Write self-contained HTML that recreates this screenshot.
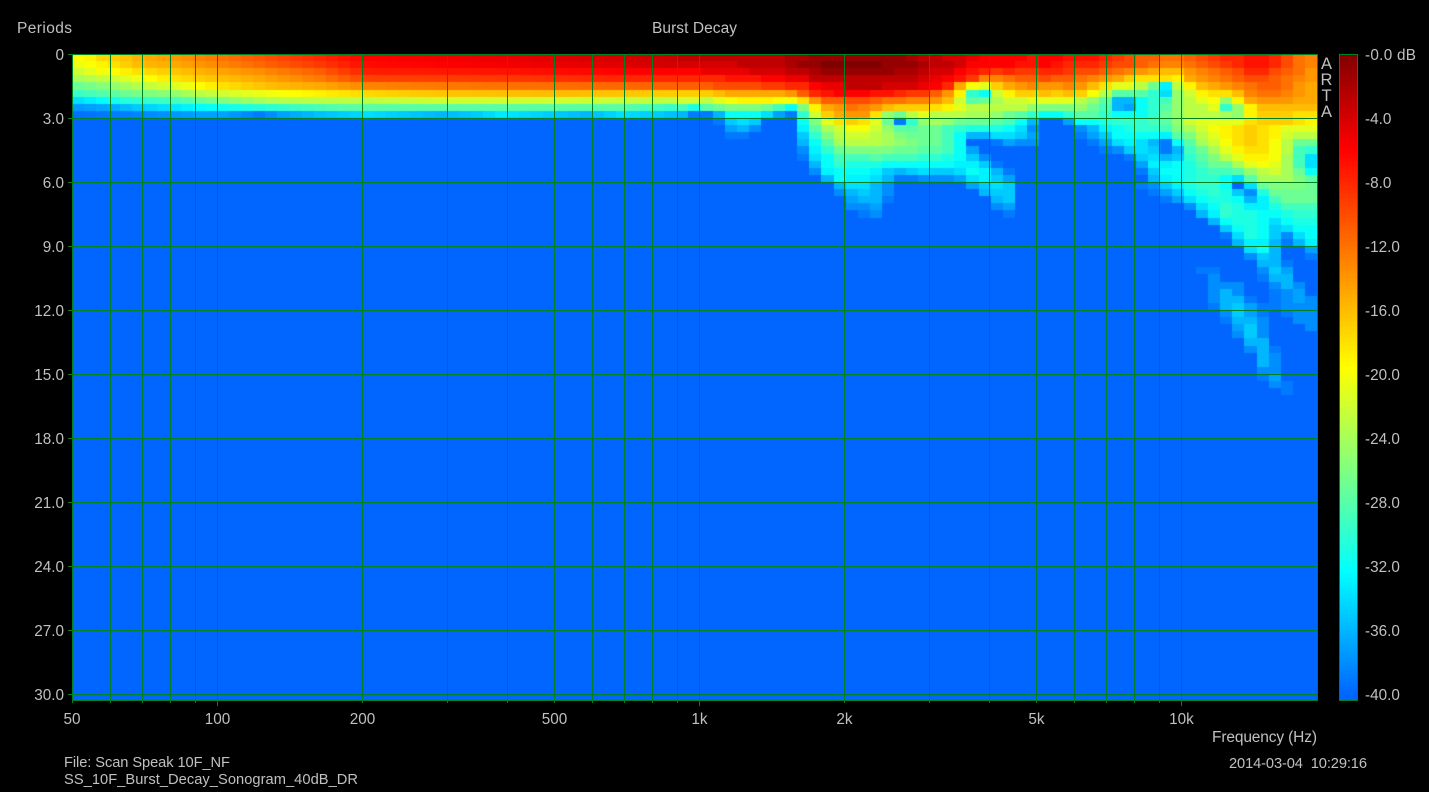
<!DOCTYPE html>
<html>
<head>
<meta charset="utf-8">
<title>Burst Decay</title>
<style>
html,body{margin:0;padding:0;background:#000;width:1429px;height:792px;overflow:hidden}
#c{position:absolute;left:72px;top:54px}
#b{position:absolute;left:1339px;top:54px}
svg{position:absolute;left:0;top:0}
text{font-family:"Liberation Sans",Arial,sans-serif;fill:#c0c0c0;white-space:pre}
.a{font-size:15.3px}
.t{font-size:15.5px}
.s{font-size:14.67px}
.ar{font-size:16.5px;text-anchor:middle}
.r{text-anchor:end}
.m{text-anchor:middle}
</style>
</head>
<body>
<canvas id="c" width="1245" height="646" style="background:#0066ff"></canvas>
<canvas id="b" width="19" height="647" style="background:#0066ff"></canvas>
<svg width="1429" height="792" viewBox="0 0 1429 792">
<g shape-rendering="crispEdges" stroke="#008020" stroke-width="1" fill="none">
<path d="M68 54.5H1317.5M68 118.5H1317.5M68 182.5H1317.5M68 246.5H1317.5M68 310.5H1317.5M68 374.5H1317.5M68 438.5H1317.5M68 502.5H1317.5M68 566.5H1317.5M68 630.5H1317.5M68 694.5H1317.5M72 700.5H1317.5"/>
<path d="M72.5 54V703M110.5 54V703M142.5 54V703M170.5 54V703M195.5 54V703M217.5 54V706M362.5 54V703M447.5 54V703M507.5 54V703M554.5 54V703M592.5 54V703M624.5 54V703M652.5 54V703M677.5 54V703M699.5 54V706M844.5 54V703M929.5 54V703M989.5 54V703M1036.5 54V703M1074.5 54V703M1106.5 54V703M1134.5 54V703M1159.5 54V703M1181.5 54V706M1317.5 54V701"/>
<rect x="1339.5" y="54.5" width="18" height="646"/>
</g>
<text class="t" x="17" y="33" textLength="55" lengthAdjust="spacing">Periods</text>
<text class="t" x="652" y="33" textLength="85" lengthAdjust="spacing">Burst Decay</text>
<text class="a r" x="64" y="60">0</text>
<text class="a r" x="64" y="124">3.0</text>
<text class="a r" x="64" y="188">6.0</text>
<text class="a r" x="64" y="252">9.0</text>
<text class="a r" x="64" y="316">12.0</text>
<text class="a r" x="64" y="380">15.0</text>
<text class="a r" x="64" y="444">18.0</text>
<text class="a r" x="64" y="508">21.0</text>
<text class="a r" x="64" y="572">24.0</text>
<text class="a r" x="64" y="636">27.0</text>
<text class="a r" x="64" y="700">30.0</text>
<text class="a m" x="72" y="724">50</text>
<text class="a m" x="217.5" y="724">100</text>
<text class="a m" x="362.5" y="724">200</text>
<text class="a m" x="554.5" y="724">500</text>
<text class="a m" x="699.5" y="724">1k</text>
<text class="a m" x="844.5" y="724">2k</text>
<text class="a m" x="1036.5" y="724">5k</text>
<text class="a m" x="1181.5" y="724">10k</text>
<text class="t" x="1212" y="742" textLength="105" lengthAdjust="spacing">Frequency (Hz)</text>
<text class="s" x="64" y="767" textLength="166" lengthAdjust="spacing">File: Scan Speak 10F_NF</text>
<text class="s" x="64" y="784" textLength="294" lengthAdjust="spacing">SS_10F_Burst_Decay_Sonogram_40dB_DR</text>
<text class="s" x="1229" y="768" textLength="138" lengthAdjust="spacing">2014-03-04  10:29:16</text>
<text class="ar" x="1326.5" y="69">A</text>
<text class="ar" x="1326.5" y="85">R</text>
<text class="ar" x="1326.5" y="101">T</text>
<text class="ar" x="1326.5" y="117">A</text>
<text class="a" x="1365" y="60" textLength="51" lengthAdjust="spacing">-0.0 dB</text>
<text class="a" x="1365" y="124">-4.0</text>
<text class="a" x="1365" y="188">-8.0</text>
<text class="a" x="1365" y="252">-12.0</text>
<text class="a" x="1365" y="316">-16.0</text>
<text class="a" x="1365" y="380">-20.0</text>
<text class="a" x="1365" y="444">-24.0</text>
<text class="a" x="1365" y="508">-28.0</text>
<text class="a" x="1365" y="572">-32.0</text>
<text class="a" x="1365" y="636">-36.0</text>
<text class="a" x="1365" y="700">-40.0</text>
</svg>
<script>
(function(){
var AL="0123456789abcdefghijklmnopqrstuvwxyzABCDE";
function col(L){
  var r,g,b,t;
  if(L<6){r=128+127*L/6;g=0;b=0;}
  else if(L<19.6){r=255;g=255*(L-6)/13.6;b=0;}
  else if(L<32.4){t=(L-19.6)/12.8;r=255*(1-t);g=255;b=255*t;}
  else {t=Math.min(1,(L-32.4)/7.6);r=0;g=255-153*t;b=255;}
  return "rgb("+Math.round(r)+","+Math.round(g)+","+Math.round(b)+")";
}
var LEFT=[
[0,19.5,1,19,2,17.5,3,17,5,15.5,8,14,10,13,15,10.5,20,8,24,6,35,5,45,4,50,3.5],
[0,20.5,2,19,3,18,5,16,8,15,10,14,15,11.5,20,9,24,6.5,35,5.5,45,4.5,50,3.5],
[0,22,2,20,3,19.5,5,18,8,16.5,10,15.5,15,13.5,20,11,24,7.5,35,7,45,6,50,6],
[0,24,3,22,5,20.5,6,19.5,8,18,11,16.5,15,15,20,12.5,24,9.5,35,9,45,8,50,8],
[0,27,3,25,6,22.5,9,20.5,10,19.5,12,18,16,16,20,15,24,13,35,12,45,11.5,50,11],
[0,29.5,4,27,8,25,10,23,14,21,18,19.5,21,18.5,24,17.5,30,16.5,40,16,50,17],
[0,34,2,32.5,4,30.5,8,29,12,26,16,23.5,20,23,24,23,30,22,40,22,50,23],
[0,37.5,3,36.5,5,35,8,33.5,10,32.5,14,31,18,29.5,22,28,24,28,35,28,45,28,50,30],
[0,39.5,5,38.5,10,37,12,37,15,39,17,37,20,35.5,23,34.5,24,34,27,35,30,36,33,35,35,33.5,38,34.5,42,36,45,34,48,35,50,36]
];
var S=[
[0,50,"333333333221111111123344566667"],[0,80,"6677789abbccba988778acd"],
[1,50,"444443333211000001112334666677"],[1,80,"678889aabcddcba98778acd"],
[2,50,"665555444332111111223446789899"],[2,80,"889aabcdefggedcba88abce"],
[3,50,"8888777665533333333345679ddcbb"],[3,80,"abbcdefhiiijfedcbaabcde"],
[4,50,"bbbaaaa9988655333444568fklhfed"],[4,80,"eedegillnrxnjgfedcbbcef"],
[5,50,"hhhgfffffeb8766677899bejuwmjhh"],[5,80,"ghghknsssuypmjiigdccdef"],
[6,50,"mmnlkjjjkkiebbaabccddegmsromml"],[6,80,"lllnpsAAwutpnlkpjfeeeff"],
[7,50,"tvsrqqqrtwqjfecdeghhhijlnnnnnp"],[7,80,"qqqprtABwuspnnlupjggggg"],
[8,50,"ADDAwwwyBDumhfeeiprnlnnnooprsu"],[8,80,"wwussuwwwurpnnnopjhhhii"],
[9,50,"EEEDzyzEEEwqlihilrDupoprrrstwA"],[9,80,"EEBwwvuuutspmllljjhhijj"],
[10,50,"EEEEBACEEExsomkkmpssrrtuvvvwyC"],[10,80,"EEECAxwvuutqomlkjhhikkk"],
[11,50,"EEEEDDEEEEzuqnmmnoqrrrtwAAyyzB"],[11,80,"EEEDBzwwwwxspnmlkiijlmm"],
[12,60,"Awsonnnopqrrtw"],[12,76,"DBCC"],[12,84,"DByxyADwronlliijmpp"],
[13,60,"CxurqqqqrrsstwB"],[13,85,"DCzyzDAuqonmjjkmsu"],
[14,60,"DywtttstttuuvwzC"],[14,87,"DzyAzvsqomkkknsy"],
[15,61,"AwuvvvwwwwwwxxzD"],[15,88,"Bxxwwtsqonmnoty"],
[16,61,"CxwwwxzAzyzzywxAD"],[16,88,"Dzwwvutsrpnnotu"],
[17,62,"AwxxyADDCCCByxzB"],[17,89,"Axwvuuwysqoprt"],
[18,63,"AyyAC"],[18,74,"Bzyz"],[18,88,"DCzxwuuwEytqqqr"],
[19,63,"CAzAC"],[19,75,"Azz"],[19,89,"DBzwwvvACvsrrr"],
[20,64,"BAAD"],[20,76,"Az"],[20,90,"DBywvuwzwtsss"],
[21,64,"CCB"],[21,76,"CB"],[21,92,"Axwvvwxvutt"],
[22,65,"DC"],[22,77,"D"],[22,93,"Aywwwxwwvv"],
[23,94,"Axuuwxxwt"],[24,95,"ywuwAyyw"],[25,95,"DyuwBCzw"],[26,96,"zwwADAx"],
[27,97,"ywAEEB"],[28,97,"CyzEED"],[29,98,"zzD"],[30,93,"DD"],[30,98,"ByA"],
[31,94,"C"],[31,98,"Dzz"],[32,94,"BBB"],[32,99,"BzB"],[33,94,"CzC"],[33,99,"DBA"],
[34,94,"CzzD"],[34,99,"DBAC"],[35,94,"DzyAD"],[35,99,"DCBB"],[36,95,"ByAD"],[36,100,"DBB"],
[37,95,"DzzC"],[37,101,"CB"],[38,96,"AyC"],[38,102,"C"],[39,96,"CyB"],[40,97,"zz"],
[41,97,"BzD"],[42,98,"zB"],[43,98,"zB"],[44,98,"BB"],[45,98,"DA"],[46,99,"CD"],[47,100,"D"],
[9,92,"mllllihhhij"],[10,92,"omkjihijlll"],[11,92,"qnljihijmnn"],[12,92,"somkihiknrr"],
[13,92,"troljiikntu"],[14,92,"usqnljjkoty"],[15,92,"vtrrolkloty"],[16,92,"vuttspnmorw"],
[17,92,"vuuwysoooqs"],[18,92,"vuuwEyrqqqr"],[19,92,"wvuvzCvrrrr"],[20,92,"ywvvwAxtrrr"],
[21,92,"Cywuvxxvttt"],[22,92,"EAxuvvwwvuu"],[23,92,"EEAwvvwywvv"],[24,92,"EEEzwvwzyww"],
[25,92,"EEEDyvwzCyw"],[26,92,"EEEEAxxADAx"]
];
var NC=103,NR=91,CW=1245/103,RH=64/9;
var g=[],i,j;
for(j=0;j<NR;j++){g[j]=[];for(i=0;i<NC;i++)g[j][i]=40;}
for(j=0;j<LEFT.length;j++){
  var p=LEFT[j],k=0;
  for(i=0;i<50;i++){
    while(k+2<p.length-2&&p[k+2]<=i)k+=2;
    var x0=p[k],y0=p[k+1],x1=p[k+2],y1=p[k+3];
    g[j][i]=y0+(y1-y0)*(i-x0)/(x1-x0);
  }
}
S.forEach(function(e){
  for(var n=0;n<e[2].length;n++){
    var v=AL.indexOf(e[2].charAt(n));
    if(e[0]>=28&&v<38)v=v+1;
    g[e[0]][e[1]+n]=v;
  }
});
var c=document.getElementById("c").getContext("2d");
c.fillStyle=col(40);c.fillRect(0,0,1245,646);
for(j=0;j<NR;j++){
  var y=Math.round(j*RH),h=Math.round((j+1)*RH)-y;
  for(i=0;i<NC;i++){
    if(g[j][i]>=40)continue;
    var x=Math.round(i*CW),w=Math.round((i+1)*CW)-x;
    c.fillStyle=col(g[j][i]);c.fillRect(x,y,w,h);
  }
}
var b=document.getElementById("b").getContext("2d");
for(var yy=0;yy<647;yy+=4){
  b.fillStyle=col(Math.min(40,(yy+2)/16));
  b.fillRect(0,yy,19,4);
}
})();
</script>
</body>
</html>
